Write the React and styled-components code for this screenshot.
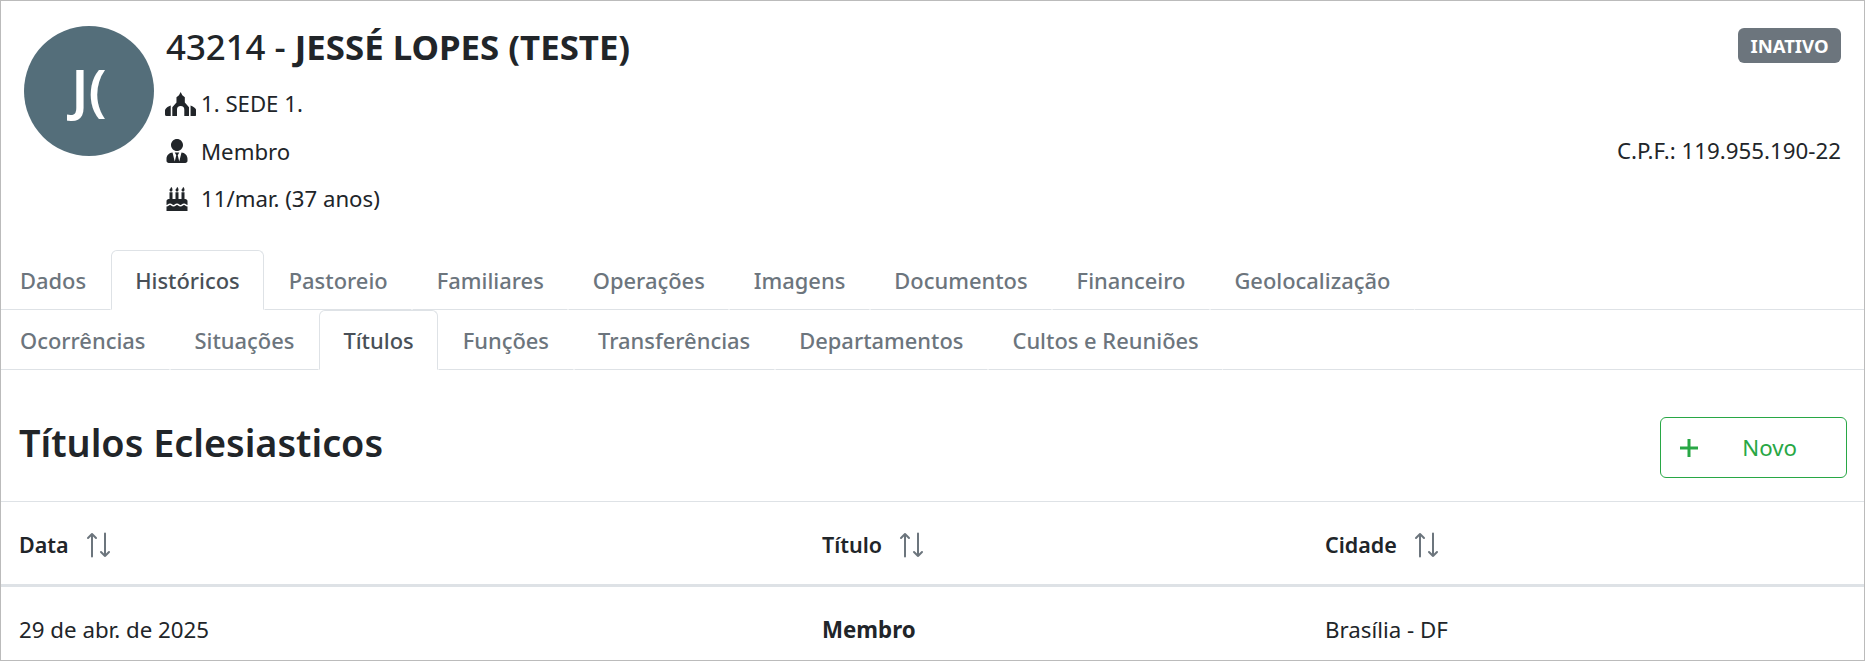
import React from 'react';
import styled, { createGlobalStyle } from 'styled-components';
import { FaUserTie, FaBirthdayCake } from 'react-icons/fa';

const GlobalStyle = createGlobalStyle`
  html, body { margin: 0; padding: 0; background: #fff; overflow: hidden; }
  body { font-family: "Noto Sans", "Open Sans", sans-serif; color: #212529; }
  * { box-sizing: border-box; }
`;

const Frame = styled.div`
  width: 1865px;
  height: 661px;
  border: 1px solid #bbbbbb;
  overflow: hidden;
  display: flex;
  flex-direction: column;
`;

const Profile = styled.header`
  height: 249px;
  flex: none;
  padding: 25px 23px 0;
  display: flex;
  gap: 11px;
`;

const Avatar = styled.div`
  width: 130px;
  height: 130px;
  flex: none;
  border-radius: 50%;
  background: #546e7a;
  color: #fff;
  font-size: 56px;
  font-weight: 600;
  padding-bottom: 6px;
  display: flex;
  align-items: center;
  justify-content: center;
`;

const Info = styled.div`
  flex: 1;
  display: flex;
  flex-direction: column;
`;

const Name = styled.h1`
  margin: 0 0 8px;
  padding-left: 1px;
  height: 46px;
  line-height: 42px;
  font-size: 34.8px;
  font-weight: 500;
  strong { font-weight: 700; }
`;

const InfoLine = styled.div`
  height: 47.5px;
  display: flex;
  align-items: center;
  font-size: 22.2px;
`;

const IconSlot = styled.span`
  width: 36px;
  flex: none;
  display: flex;
  align-items: center;
  svg { height: 24px; width: auto; display: block; }
`;

const Side = styled.div`
  display: flex;
  flex-direction: column;
  align-items: flex-end;
`;

const Badge = styled.span`
  margin-top: 2px;
  height: 35px;
  width: 103px;
  border-radius: 6px;
  background: #6c757d;
  color: #fff;
  font-size: 18.5px;
  font-weight: 700;
  display: flex;
  align-items: center;
  justify-content: center;
`;

const Cpf = styled.div`
  margin-top: 64px;
  height: 48px;
  line-height: 48px;
  font-size: 22.3px;
`;

const TabBar = styled.nav`
  height: 60px;
  flex: none;
  display: flex;
  align-items: flex-end;
  border-bottom: 1px solid #dee2e6;
`;

const Tab = styled.div`
  height: 60px;
  margin-bottom: -1px;
  padding: 0 23.5px;
  display: flex;
  align-items: center;
  font-size: 21.9px;
  font-weight: 500;
  color: ${p => (p.$active ? '#495057' : '#6c757d')};
  background: #fff;
  border: 1px solid ${p => (p.$active ? '#dee2e6' : 'transparent')};
  border-bottom-color: ${p => (p.$active ? '#fff' : '#dee2e6')};
  border-radius: 6px 6px 0 0;
  &:first-child { padding-left: 19px; border-left: 0; }
`;

const SectionHead = styled.div`
  height: 132px;
  flex: none;
  padding: 14px 17px 0 18px;
  display: flex;
  align-items: center;
  justify-content: space-between;
  border-bottom: 1px solid #dee2e6;
`;

const Heading = styled.h2`
  margin: 0;
  font-size: 37.8px;
  font-weight: 600;
`;

const NewButton = styled.button`
  width: 187px;
  height: 61px;
  margin-top: 10px;
  padding: 0 49px 0 18px;
  display: flex;
  align-items: center;
  justify-content: space-between;
  background: #fff;
  border: 1px solid #28a745;
  border-radius: 6px;
  color: #28a745;
  font-family: inherit;
  font-size: 22.3px;
`;

const HeadRow = styled.div`
  display: grid;
  grid-template-columns: 803px 503px 1fr;
  align-items: center;
  height: 85px;
  flex: none;
  padding: 3px 0 0 18px;
  border-bottom: 3px solid #dee2e6;
`;

const BodyRow = styled.div`
  display: grid;
  grid-template-columns: 803px 503px 1fr;
  align-items: center;
  height: 73px;
  flex: none;
  padding: 12px 0 0 18px;
`;

const HeadCell = styled.div`
  display: flex;
  align-items: center;
  gap: 17px;
  font-size: 21.5px;
  font-weight: 600;
`;

const Cell = styled.div`
  font-size: 22.3px;
  font-weight: ${p => (p.$bold ? 700 : 400)};
`;

// igreja desenhada a mao, o icone do pacote tem cruz no topo
const ChurchIcon = () => (
  <svg viewBox="0 0 30 23" fill="#212529">
    <path fillRule="evenodd" d="M15 0l1.6 3 2.4 2v5l4 4.5V23h-4.500v-6a3.500 3.500 0 0 0-7 0v6H7v-8.500l4-4.500V5l2.400-2z" />
    <path d="M5.500 13v10H1.500A1.500 1.500 0 0 1 0 21.500V18c0-2 2.500-4 5.500-5zM24.500 13v10h4a1.500 1.500 0 0 0 1.500-1.500V18c0-2-2.500-4-5.500-5z" />
  </svg>
);

// seta pra cima + seta pra baixo
const SortIcon = () => (
  <svg width="25" height="26" viewBox="0 0 25 26" fill="none" stroke="#6c757d" strokeWidth="2" strokeLinecap="round" strokeLinejoin="round">
    <path d="M6 24.500V2M2 6l4-4 4 4" />
    <path d="M19 1.500V24M15 20l4 4 4-4" />
  </svg>
);

const PlusIcon = () => (
  <svg width="20" height="20" viewBox="0 0 20 20" fill="none" stroke="#28a745" strokeWidth="3">
    <path d="M10 1v18M1 10h18" />
  </svg>
);

const mainTabs = ['Dados', 'Históricos', 'Pastoreio', 'Familiares', 'Operações', 'Imagens', 'Documentos', 'Financeiro', 'Geolocalização'];
const subTabs = ['Ocorrências', 'Situações', 'Títulos', 'Funções', 'Transferências', 'Departamentos', 'Cultos e Reuniões'];

export default function App() {
  return (
    <>
      <GlobalStyle />
      <Frame>
        <Profile>
          <Avatar>J(</Avatar>
          <Info>
            <Name>43214 - <strong>JESSÉ LOPES (TESTE)</strong></Name>
            <InfoLine><IconSlot><ChurchIcon /></IconSlot>1. SEDE 1.</InfoLine>
            <InfoLine><IconSlot><FaUserTie /></IconSlot>Membro</InfoLine>
            <InfoLine><IconSlot><FaBirthdayCake /></IconSlot>11/mar. (37 anos)</InfoLine>
          </Info>
          <Side>
            <Badge>INATIVO</Badge>
            <Cpf>C.P.F.: 119.955.190-22</Cpf>
          </Side>
        </Profile>
        <TabBar>
          {mainTabs.map(t => <Tab key={t} $active={t === 'Históricos'}>{t}</Tab>)}
        </TabBar>
        <TabBar>
          {subTabs.map(t => <Tab key={t} $active={t === 'Títulos'}>{t}</Tab>)}
        </TabBar>
        <SectionHead>
          <Heading>Títulos Eclesiasticos</Heading>
          <NewButton><PlusIcon />Novo</NewButton>
        </SectionHead>
        <HeadRow>
          <HeadCell>Data <SortIcon /></HeadCell>
          <HeadCell>Título <SortIcon /></HeadCell>
          <HeadCell>Cidade <SortIcon /></HeadCell>
        </HeadRow>
        <BodyRow>
          <Cell>29 de abr. de 2025</Cell>
          <Cell $bold>Membro</Cell>
          <Cell>Brasília - DF</Cell>
        </BodyRow>
      </Frame>
    </>
  );
}
